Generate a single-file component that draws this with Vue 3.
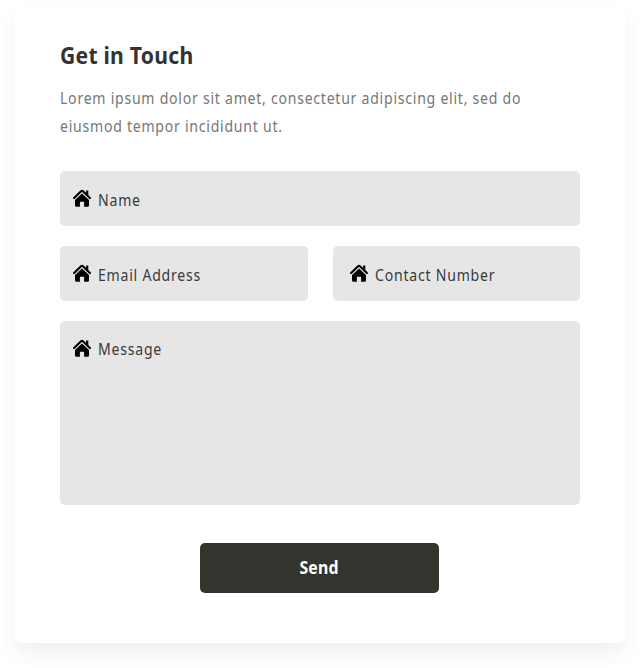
<script setup>
import { h } from 'vue'

const HomeIcon = () =>
  h('svg', { viewBox: '0 0 18 18', width: 18, height: 18, 'aria-hidden': 'true' }, [
    h('path', {
      d: 'M1.1 9.1 7.8 2.4Q9 1.3 10.2 2.4L16.9 9.1',
      fill: 'none',
      stroke: '#000',
      'stroke-width': 2.1,
      'stroke-linecap': 'round',
      'stroke-linejoin': 'round',
    }),
    h('path', { d: 'M13.1 1.4h2.2v5.4l-2.2-2.2z' }),
    h('path', {
      d: 'M9 4.5 16 11.1v5.1q0 1.5-1.5 1.5h-3.4v-4.5q0-.5-.5-.5H7.4q-.5 0-.5.5v4.5H3.5Q2 17.7 2 16.2v-5.1z',
    }),
  ])
</script>

<template>
  <main class="page">
    <section class="card">
      <h1 class="title">Get in Touch</h1>
      <p class="intro">
        <span class="line">Lorem ipsum dolor sit amet, consectetur adipiscing elit, sed do</span>
        <span class="line">eiusmod tempor incididunt ut.</span>
      </p>
      <form class="form" @submit.prevent>
        <label class="field wide"><HomeIcon /><span class="label">Name</span></label>
        <label class="field"><HomeIcon /><span class="label">Email Address</span></label>
        <label class="field contact"><HomeIcon /><span class="label">Contact Number</span></label>
        <label class="field wide message"><HomeIcon /><span class="label">Message</span></label>
        <button class="send" type="submit"><span class="send-text">Send</span></button>
      </form>
    </section>
  </main>
</template>

<style>
body {
  background: #fff;
  overflow: hidden;
}
</style>

<style scoped>
.page {
  box-sizing: border-box;
  height: 668px;
  padding: 9px 15px 25px;
  overflow: hidden;
  font-family: 'Noto Sans', sans-serif;
}
.card {
  box-sizing: border-box;
  height: 634px;
  padding: 30px 45px 0;
  border-radius: 6px;
  background: #fff;
  box-shadow: 0 9px 20px rgba(30, 70, 60, 0.075);
}
.title {
  margin: 0;
  font-size: 23px;
  font-weight: 700;
  line-height: 32px;
  letter-spacing: 0.25px;
  color: #333;
  transform: scaleX(0.92);
  transform-origin: left;
}
.intro {
  margin: 13px 0 0;
  font-size: 15.5px;
  line-height: 28px;
  letter-spacing: 0.82px;
  color: #777;
}
.line {
  display: block;
  white-space: nowrap;
  transform: scaleX(0.908);
  transform-origin: left;
}
.form {
  display: grid;
  grid-template-columns: 248px 247px;
  grid-template-rows: 55px 55px 184px 50px;
  column-gap: 25px;
  row-gap: 20px;
  margin-top: 31px;
}
.field {
  box-sizing: border-box;
  display: flex;
  align-items: flex-start;
  gap: 7px;
  padding: 18px 13px 0;
  border-radius: 5px;
  background: #e6e6e6;
}
.field svg {
  flex: none;
}
.contact {
  padding-left: 17px;
}
.wide {
  grid-column: 1 / -1;
}
.label {
  font-size: 15.5px;
  line-height: 22px;
  letter-spacing: 0.85px;
  color: #3a3a3a;
  white-space: nowrap;
  transform: scaleX(0.908);
  transform-origin: left;
}
.message .label {
  line-height: 20px;
}
.send {
  grid-column: 1 / -1;
  justify-self: center;
  width: 239px;
  height: 50px;
  margin: 18px 1px 0 0;
  padding: 0;
  border: 0;
  border-radius: 5px;
  background: #33342e;
  font: 700 17px/50px 'Noto Sans', sans-serif;
  color: #fff;
}
.send-text {
  display: inline-block;
  letter-spacing: 0.2px;
  transform: scaleX(0.93);
}
</style>
